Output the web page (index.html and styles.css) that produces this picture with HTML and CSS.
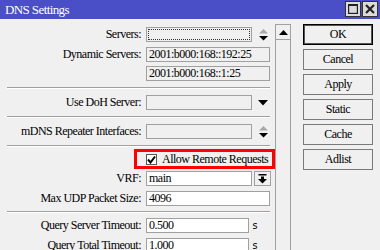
FILE: index.html
```html
<!DOCTYPE html>
<html>
<head>
<meta charset="utf-8">
<link rel="stylesheet" href="styles.css">
</head>
<body>
<div class="window">
  <div class="titlebar">
    <span class="title">DNS Settings</span>
    <div class="tbtns">
      <span class="tbtn"><svg width="10" height="10" viewBox="0 0 10 10"><rect x="0.5" y="0.5" width="9" height="9" fill="none" stroke="#222" stroke-width="1.4"/><rect x="0" y="0" width="10" height="2" fill="#222"/></svg></span>
      <span class="tbtn"><svg width="10" height="10" viewBox="0 0 10 10"><path d="M1 1 L9 9 M9 1 L1 9" stroke="#222" stroke-width="2.2"/></svg></span>
    </div>
  </div>
  <div class="body">
    <div class="form">
      <div class="row">
        <span class="label">Servers:</span>
        <div class="field"><span class="input short focused"></span><svg class="spin" width="11" height="12" viewBox="0 0 11 12"><polygon points="5.5,0 10,4.5 1,4.5" fill="#a8a8a8"/><polygon points="1,7 10,7 5.5,11.5" fill="#000"/></svg></div>
      </div>
      <div class="row mt5">
        <span class="label">Dynamic Servers:</span>
        <div class="field"><span class="input full">2001:b000:168::192:25</span></div>
      </div>
      <div class="row mt4">
        <span class="label"></span>
        <div class="field"><span class="input full">2001:b000:168::1:25</span></div>
      </div>
      <div class="sep mt6"></div>
      <div class="row mt6">
        <span class="label">Use DoH Server:</span>
        <div class="field"><span class="input short"></span><svg class="drop" width="10" height="6" viewBox="0 0 10 6"><polygon points="0,0 10,0 5,5.5" fill="#000"/></svg></div>
      </div>
      <div class="sep mt6"></div>
      <div class="row mt6">
        <span class="label">mDNS Repeater Interfaces:</span>
        <div class="field"><span class="input short"></span><svg class="spin" width="11" height="12" viewBox="0 0 11 12"><polygon points="5.5,0 10,4.5 1,4.5" fill="#a8a8a8"/><polygon points="1,7 10,7 5.5,11.5" fill="#000"/></svg></div>
      </div>
      <div class="sep mt6"></div>
      <div class="checkrow">
        <div class="highlight">
          <span class="checkbox"><svg width="9" height="9" viewBox="0 0 9 9"><path d="M1 4.5 L3.5 7.5 L8 1.5" fill="none" stroke="#000" stroke-width="2"/></svg></span>
          <span class="checktext">Allow Remote Requests</span>
        </div>
      </div>
      <div class="row mt2">
        <span class="label">VRF:</span>
        <div class="field"><span class="input short white">main</span><span class="vrfbtn"><svg width="9" height="10" viewBox="0 0 9 10"><rect x="0.5" y="0" width="8" height="1.5" fill="#000"/><rect x="3" y="2.5" width="3" height="3" fill="#000"/><polygon points="0,5 9,5 4.5,9.5" fill="#000"/></svg></span></div>
      </div>
      <div class="row mt5">
        <span class="label">Max UDP Packet Size:</span>
        <div class="field"><span class="input full white">4096</span></div>
      </div>
      <div class="sep mt5"></div>
      <div class="row mt5">
        <span class="label">Query Server Timeout:</span>
        <div class="field"><span class="input unit white">0.500</span><span class="unitlabel">s</span></div>
      </div>
      <div class="row mt5">
        <span class="label">Query Total Timeout:</span>
        <div class="field"><span class="input unit white">1.000</span><span class="unitlabel">s</span></div>
      </div>
    </div>
    <div class="scrollbar">
      <div class="sbtn"><svg width="9" height="5" viewBox="0 0 9 5"><polygon points="4.5,0 9,5 0,5" fill="#000"/></svg></div>
    </div>
    <div class="buttons">
      <div class="btn default">OK</div>
      <div class="btn">Cancel</div>
      <div class="btn">Apply</div>
      <div class="btn">Static</div>
      <div class="btn">Cache</div>
      <div class="btn">Adlist</div>
    </div>
  </div>
</div>
</body>
</html>
```

FILE: styles.css
```css
html, body {
  margin: 0;
  padding: 0;
  background: #f0f0f0;
}
body {
  font-family: "Liberation Serif", "Times New Roman", serif;
  font-size: 12px;
  letter-spacing: -0.5px;
  color: #000;
  width: 380px;
  height: 250px;
  overflow: hidden;
}
.window {
  width: 380px;
  height: 250px;
  display: flex;
  flex-direction: column;
}
.titlebar {
  height: 19px;
  flex: none;
  background: #4b4fc7;
  display: flex;
  align-items: center;
  padding-left: 5px;
  padding-right: 2px;
}
.title {
  color: #fff;
  font-size: 13px;
  letter-spacing: -0.6px;
}
.tbtns {
  margin-left: auto;
  display: flex;
  gap: 1px;
  align-self: flex-start;
  margin-top: 1px;
}
.tbtn {
  width: 14px;
  height: 14px;
  border: 1px solid #333;
  background: #dcdcdc;
  display: flex;
  align-items: center;
  justify-content: center;
}
.body {
  flex: 1;
  display: flex;
  min-height: 0;
}
.form {
  width: 270px;
  flex: none;
  padding-top: 8px;
  display: flex;
  flex-direction: column;
}
.row {
  display: grid;
  grid-template-columns: 141px 1fr;
  column-gap: 5px;
  height: 15px;
  align-items: center;
  flex: none;
}
.mt2 { margin-top: 2px; }
.mt4 { margin-top: 4px; }
.mt5 { margin-top: 5px; }
.mt6 { margin-top: 6px; }
.label {
  text-align: right;
  white-space: nowrap;
  line-height: 15px;
}
.field {
  display: flex;
  align-items: center;
  height: 15px;
}
.input {
  box-sizing: border-box;
  height: 15px;
  border: 1px solid #a0a0a0;
  background: #f0f0f0;
  padding-left: 2px;
  line-height: 13px;
  white-space: nowrap;
  overflow: hidden;
}
.input.white { background: #fff; }
.input.full { width: 124px; }
.input.short { width: 106px; }
.input.unit { width: 103px; }
.input.focused {
  outline: 1px dotted #333;
  outline-offset: -3px;
}
.spin { margin-left: 6px; }
.drop { margin-left: 6px; }
.vrfbtn {
  box-sizing: border-box;
  margin-left: 2px;
  width: 17px;
  height: 15px;
  border: 1px solid #a0a0a0;
  display: flex;
  align-items: center;
  justify-content: center;
}
.unitlabel {
  margin-left: 3px;
  font-family: "DejaVu Sans Mono", monospace;
  font-size: 10px;
  letter-spacing: 0;
}
.sep {
  margin-left: 7px;
  height: 1px;
  background: #a0a0a0;
  border-bottom: 1px solid #fff;
  flex: none;
}
.checkrow {
  margin-top: 2px;
  padding-left: 134px;
  flex: none;
}
.highlight {
  box-sizing: border-box;
  width: 141px;
  height: 20px;
  border: 3px solid #ff0000;
  display: flex;
  align-items: center;
  padding-left: 9px;
}
.checkbox {
  box-sizing: border-box;
  width: 11px;
  height: 11px;
  border: 1px solid #555;
  background: #fff;
  display: flex;
  align-items: center;
  justify-content: center;
}
.checktext {
  margin-left: 5px;
  white-space: nowrap;
}
.scrollbar {
  box-sizing: border-box;
  margin-left: 5px;
  margin-top: 5px;
  width: 16px;
  border-left: 1px solid #a0a0a0;
  border-right: 1px solid #a0a0a0;
  flex: none;
}
.sbtn {
  height: 14px;
  border-top: 1px solid #a0a0a0;
  border-bottom: 1px solid #a0a0a0;
  display: flex;
  align-items: center;
  justify-content: center;
}
.buttons {
  margin-left: 12px;
  margin-top: 5px;
  width: 70px;
  display: flex;
  flex-direction: column;
  gap: 4px;
}
.btn {
  box-sizing: border-box;
  height: 21px;
  border: 1px solid #7a7a7a;
  background: #f0f0f0;
  display: flex;
  align-items: center;
  justify-content: center;
}
.btn.default {
  border: 1px solid #000;
  box-shadow: inset 0 0 0 1px #555;
}
```
